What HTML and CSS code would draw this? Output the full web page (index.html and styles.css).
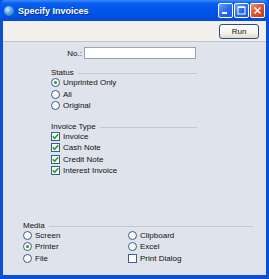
FILE: index.html
```html
<!DOCTYPE html>
<html lang="en">
<head>
    <meta charset="UTF-8">
    <meta name="viewport" content="width=device-width, initial-scale=1.0">
    <title>Specify Invoices</title>
    <link rel="stylesheet" href="styles.css">
</head>
<body>
    <div class="window">
        <div class="titlebar">
            <span class="app-icon"></span>
            <span class="title">Specify Invoices</span>
            <div class="caption-buttons">
                <span class="cap-btn">
                    <svg width="13" height="13" viewBox="0 0 13 13"><rect x="3" y="8" width="5" height="2" fill="#fff"/></svg>
                </span>
                <span class="cap-btn">
                    <svg width="13" height="13" viewBox="0 0 13 13"><rect x="3" y="3" width="7" height="7" fill="none" stroke="#fff" stroke-width="1"/><rect x="3" y="2.5" width="7" height="1.5" fill="#fff"/></svg>
                </span>
                <span class="cap-btn close">
                    <svg width="13" height="13" viewBox="0 0 13 13"><path d="M3.5 3.5 L9.5 9.5 M9.5 3.5 L3.5 9.5" stroke="#fff" stroke-width="1.6"/></svg>
                </span>
            </div>
        </div>
        <div class="frame">
            <div class="toolbar">
                <button class="run">Run</button>
            </div>
            <div class="content">
                <div class="field-row">
                    <label class="field-label">No.:</label>
                    <input class="field-input" type="text">
                </div>

                <div class="group status-group">
                    <div class="group-label"><span>Status</span></div>
                    <div class="option"><span class="radio checked"></span>Unprinted Only</div>
                    <div class="option"><span class="radio"></span>All</div>
                    <div class="option"><span class="radio"></span>Original</div>
                </div>

                <div class="group type-group">
                    <div class="group-label"><span>Invoice Type</span></div>
                    <div class="option"><span class="check"><svg width="7" height="7" viewBox="0 0 7 7"><path d="M0.8 3.3 L2.6 5.3 L6.2 1.2" fill="none" stroke="#21a121" stroke-width="1.6"/></svg></span>Invoice</div>
                    <div class="option"><span class="check"><svg width="7" height="7" viewBox="0 0 7 7"><path d="M0.8 3.3 L2.6 5.3 L6.2 1.2" fill="none" stroke="#21a121" stroke-width="1.6"/></svg></span>Cash Note</div>
                    <div class="option"><span class="check"><svg width="7" height="7" viewBox="0 0 7 7"><path d="M0.8 3.3 L2.6 5.3 L6.2 1.2" fill="none" stroke="#21a121" stroke-width="1.6"/></svg></span>Credit Note</div>
                    <div class="option"><span class="check"><svg width="7" height="7" viewBox="0 0 7 7"><path d="M0.8 3.3 L2.6 5.3 L6.2 1.2" fill="none" stroke="#21a121" stroke-width="1.6"/></svg></span>Interest Invoice</div>
                </div>

                <div class="group media-group">
                    <div class="group-label"><span>Media</span></div>
                    <div class="media-grid">
                        <div class="option"><span class="radio"></span>Screen</div>
                        <div class="option"><span class="radio"></span>Clipboard</div>
                        <div class="option"><span class="radio checked"></span>Printer</div>
                        <div class="option"><span class="radio"></span>Excel</div>
                        <div class="option"><span class="radio"></span>File</div>
                        <div class="option"><span class="check"></span>Print Dialog</div>
                    </div>
                </div>
            </div>
        </div>
    </div>
</body>
</html>
```

FILE: styles.css
```css
body {
    margin: 0;
    font-family: "Liberation Sans", Arial, sans-serif;
    font-size: 8px;
    color: #111;
}
.window {
    width: 269px;
    height: 279px;
    display: flex;
    flex-direction: column;
    background: #0a4fd8;
}
.titlebar {
    height: 21px;
    display: flex;
    align-items: center;
    padding: 0 4px;
    background: linear-gradient(to bottom, #3f8ffb 0%, #0a5ef0 15%, #0056e8 50%, #0051df 85%, #0a4ad0 100%);
    border-radius: 5px 5px 0 0;
}
.app-icon {
    width: 10px;
    height: 10px;
    border-radius: 50%;
    background: radial-gradient(circle at 35% 35%, #d8ecff 0%, #5aa8e8 40%, #1d5fa8 100%);
    margin-right: 4px;
}
.title {
    color: #fff;
    font-weight: bold;
    font-size: 9px;
    text-shadow: 1px 1px 0 #0a2f8a;
}
.caption-buttons {
    margin-left: auto;
    display: flex;
    gap: 1px;
}
.cap-btn {
    width: 13px;
    height: 13px;
    border: 1px solid #fff;
    border-radius: 2px;
    background: linear-gradient(135deg, #6fa2ff 0%, #2a6bf0 50%, #1c55e0 100%);
    display: flex;
}
.cap-btn.close {
    background: linear-gradient(135deg, #f0906e 0%, #e0502a 50%, #c83a18 100%);
}
.frame {
    flex: 1;
    display: flex;
    flex-direction: column;
    margin: 0 3px 4px 3px;
}
.toolbar {
    height: 20px;
    background: #f1f0ec;
    border-bottom: 1px solid #c4c4c4;
    display: flex;
    align-items: flex-start;
    justify-content: flex-end;
    padding-right: 7px;
}
.run {
    margin-top: 3px;
    width: 40px;
    height: 15px;
    padding: 0;
    border: 1px solid #2a4f7c;
    border-radius: 3px;
    background: linear-gradient(to bottom, #ffffff 0%, #f4f3ee 60%, #dcdad0 100%);
    font-family: "Liberation Sans", Arial, sans-serif;
    font-size: 8px;
    color: #111;
}
.content {
    flex: 1;
    background: #dfe3eb;
    display: flex;
    flex-direction: column;
    padding: 5px 0 11px 0;
}
.field-row {
    display: flex;
    align-items: center;
    height: 12px;
}
.field-label {
    width: 79px;
    text-align: right;
    margin-right: 2px;
}
.field-input {
    width: 112px;
    height: 12px;
    box-sizing: border-box;
    border: 1px solid #9ea3ab;
    background: #fff;
    padding: 0;
    margin: 0;
}
.group-label {
    display: flex;
    align-items: center;
    height: 9px;
    line-height: 9px;
}
.group-label::after {
    content: "";
    flex: 1;
    height: 1px;
    margin-left: 4px;
    margin-top: 2px;
    background: #c3c7cf;
}
.option {
    display: flex;
    align-items: center;
    height: 11.5px;
    white-space: nowrap;
}
.status-group {
    margin: 9px 0 0 48px;
    width: 146px;
}
.type-group {
    margin: 10px 0 0 48px;
    width: 146px;
}
.media-group {
    margin: auto 0 0 20px;
    width: 230px;
}
.media-grid {
    display: grid;
    grid-template-columns: 105px 1fr;
}
.radio {
    width: 9px;
    height: 9px;
    box-sizing: border-box;
    border: 1px solid #3c5f8c;
    border-radius: 50%;
    background: radial-gradient(circle at 40% 40%, #ffffff 40%, #e4e6e0 100%);
    margin-right: 3px;
    display: flex;
    align-items: center;
    justify-content: center;
}
.radio.checked::after {
    content: "";
    width: 3px;
    height: 3px;
    border-radius: 50%;
    background: #21a121;
}
.check {
    width: 9px;
    height: 9px;
    box-sizing: border-box;
    border: 1px solid #3c5f8c;
    background: #fcfcfa;
    margin-right: 3px;
    display: flex;
    align-items: center;
    justify-content: center;
}
.check svg {
    flex: none;
}
```
